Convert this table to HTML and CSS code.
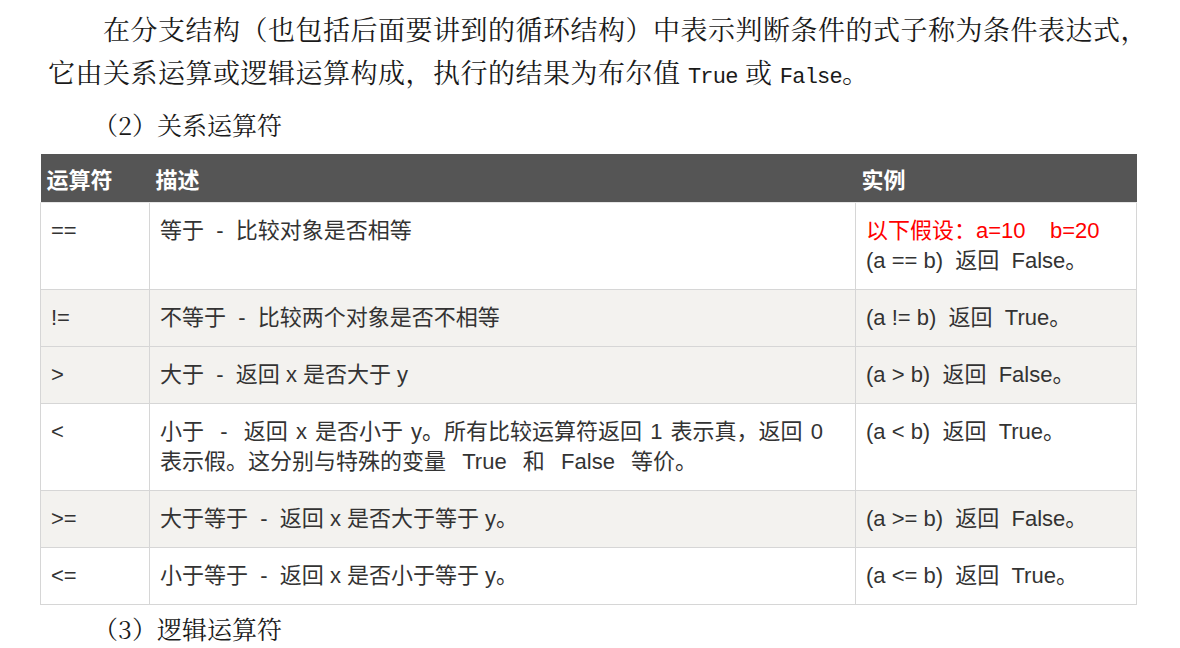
FILE: index.html
```html
<!DOCTYPE html>
<html lang="zh">
<head>
<meta charset="utf-8">
<link rel="stylesheet" href="styles.css">
</head>
<body>
<div class="page">
  <p class="para">在分支结构（也包括后面要讲到的循环结构）中表示判断条件的式子称为条件表达式，<br>它由关系运算或逻辑运算构成，执行的结果为布尔值 <span class="mono">True</span> 或 <span class="mono">False</span>。</p>
  <h2 class="sub">（2）关系运算符</h2>
  <table class="ops">
    <colgroup>
      <col class="c1"><col class="c2"><col class="c3">
    </colgroup>
    <thead>
      <tr><th>运算符</th><th>描述</th><th>实例</th></tr>
    </thead>
    <tbody>
      <tr>
        <td>==</td>
        <td>等于 &nbsp;-&nbsp; 比较对象是否相等</td>
        <td><span class="red">以下假设：a=10 &nbsp; &nbsp;b=20</span><br>(a == b) &nbsp;返回 &nbsp;False。</td>
      </tr>
      <tr class="alt">
        <td>!=</td>
        <td>不等于 &nbsp;-&nbsp; 比较两个对象是否不相等</td>
        <td>(a != b) &nbsp;返回 &nbsp;True。</td>
      </tr>
      <tr class="alt">
        <td>&gt;</td>
        <td>大于 &nbsp;-&nbsp; 返回 x 是否大于 y</td>
        <td>(a &gt; b) &nbsp;返回 &nbsp;False。</td>
      </tr>
      <tr>
        <td>&lt;</td>
        <td class="wide">小于 &nbsp;-&nbsp; 返回 x 是否小于 y。所有比较运算符返回 1 表示真，返回 0<br>表示假。这分别与特殊的变量 &nbsp;True &nbsp;和 &nbsp;False &nbsp;等价。</td>
        <td>(a &lt; b) &nbsp;返回 &nbsp;True。</td>
      </tr>
      <tr class="alt">
        <td>&gt;=</td>
        <td>大于等于 &nbsp;-&nbsp; 返回 x 是否大于等于 y。</td>
        <td>(a &gt;= b) &nbsp;返回 &nbsp;False。</td>
      </tr>
      <tr>
        <td>&lt;=</td>
        <td>小于等于 &nbsp;-&nbsp; 返回 x 是否小于等于 y。</td>
        <td>(a &lt;= b) &nbsp;返回 &nbsp;True。</td>
      </tr>
    </tbody>
  </table>
  <h2 class="sub sub3">（3）逻辑运算符</h2>
</div>
</body>
</html>
```

FILE: styles.css
```css
html, body {
  margin: 0;
  padding: 0;
  background: #fff;
}

.page {
  padding-top: 7px;
  color: #111;
  font-family: "Noto Serif CJK SC", "Noto Sans CJK SC", serif;
}

.para {
  margin: 0;
  padding: 0 0 0 48px;
  font-size: 27px;
  letter-spacing: 0.5px;
  line-height: 43px;
  text-indent: 55px;
  white-space: nowrap;
  color: #1a1a1a;
}

.mono {
  font-family: "Liberation Mono", monospace;
  font-size: 22px;
  letter-spacing: -0.8px;
  line-height: 1;
}

.sub {
  margin: 10px 0 0 0;
  padding-left: 93px;
  font-size: 25px;
  font-weight: normal;
  line-height: 43px;
  color: #1a1a1a;
}

.sub3 {
  margin-top: 2px;
}

.ops {
  margin: 8px 0 0 40px;
  width: 1096px;
  border-collapse: collapse;
  table-layout: fixed;
  font-family: "Liberation Sans", "Noto Sans CJK SC", sans-serif;
  font-size: 22px;
  color: #333;
}

.c1 { width: 109px; }
.c2 { width: 706px; }
.c3 { width: 281px; }

.ops th {
  background: #555;
  color: #fff;
  font-family: "Noto Sans CJK SC", sans-serif;
  font-weight: bold;
  font-size: 22px;
  text-align: left;
  height: 48px;
  padding: 0 6px;
  line-height: 26px;
  border-bottom: 1px solid #e6e6e6;
}

.ops td {
  border: 1px solid #d6d6d6;
  padding: 13px 10px;
  line-height: 30px;
  vertical-align: top;
  white-space: nowrap;
}

.ops td.wide {
  word-spacing: 2px;
}

.ops tr.alt td {
  background: #f3f2ef;
}

.red {
  color: #f00;
}
```
